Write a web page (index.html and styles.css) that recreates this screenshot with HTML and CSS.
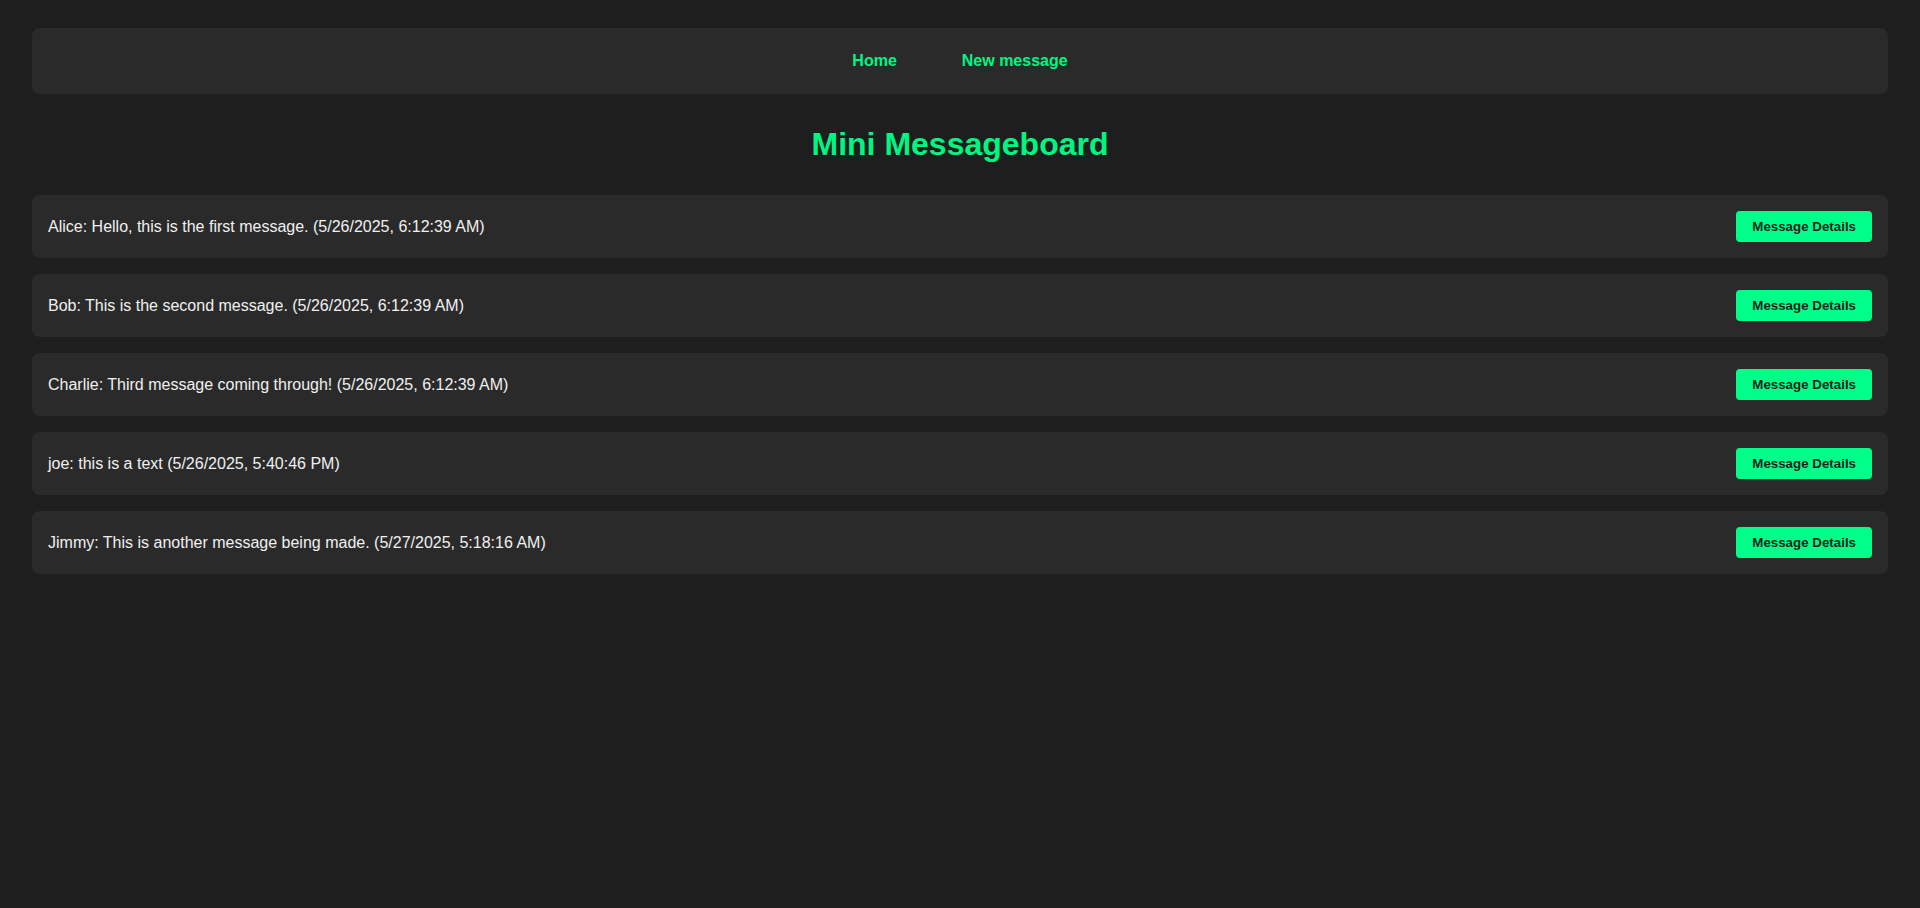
FILE: index.html
```html
<!DOCTYPE html>
<html lang="en">
<head>
<meta charset="utf-8">
<title>Mini Messageboard</title>
<link rel="stylesheet" href="styles.css">
</head>
<body>
  <nav class="nav">
    <a class="nav-link" href="#">Home</a>
    <a class="nav-link" href="#">New message</a>
  </nav>
  <h1 class="title">Mini Messageboard</h1>
  <ul class="messages">
    <li class="message">
      <span class="message-text">Alice: Hello, this is the first message. (5/26/2025, 6:12:39 AM)</span>
      <button class="details-btn">Message Details</button>
    </li>
    <li class="message">
      <span class="message-text">Bob: This is the second message. (5/26/2025, 6:12:39 AM)</span>
      <button class="details-btn">Message Details</button>
    </li>
    <li class="message">
      <span class="message-text">Charlie: Third message coming through! (5/26/2025, 6:12:39 AM)</span>
      <button class="details-btn">Message Details</button>
    </li>
    <li class="message">
      <span class="message-text">joe: this is a text (5/26/2025, 5:40:46 PM)</span>
      <button class="details-btn">Message Details</button>
    </li>
    <li class="message">
      <span class="message-text">Jimmy: This is another message being made. (5/27/2025, 5:18:16 AM)</span>
      <button class="details-btn">Message Details</button>
    </li>
  </ul>
</body>
</html>
```

FILE: styles.css
```css
html, body {
  background: #1e1e1e;
}
body {
  margin: 0;
  padding: 28px 32px;
  font-family: "Liberation Sans", Arial, sans-serif;
  color: #f0f0f0;
}
.nav {
  display: flex;
  justify-content: center;
  align-items: center;
  gap: 65px;
  height: 66px;
  background: #2a2a2a;
  border-radius: 8px;
}
.nav-link {
  color: #00f582;
  font-weight: bold;
  font-size: 16px;
  text-decoration: none;
}
.title {
  margin: 32px 0;
  text-align: center;
  font-size: 32px;
  font-weight: bold;
  color: #00f582;
  line-height: 37px;
}
.messages {
  list-style: none;
  margin: 0;
  padding: 0;
  display: flex;
  flex-direction: column;
  gap: 16px;
}
.message {
  display: flex;
  justify-content: space-between;
  align-items: center;
  background: #2a2a2a;
  border-radius: 8px;
  padding: 16px;
  font-size: 16px;
}
.message-text {
  color: #f0f0f0;
}
.details-btn {
  background: #00ff88;
  color: #1e1e1e;
  border: none;
  border-radius: 4px;
  padding: 8px 16px;
  height: 31px;
  font-family: "Liberation Sans", Arial, sans-serif;
  font-weight: bold;
  font-size: 13.33px;
}
```
